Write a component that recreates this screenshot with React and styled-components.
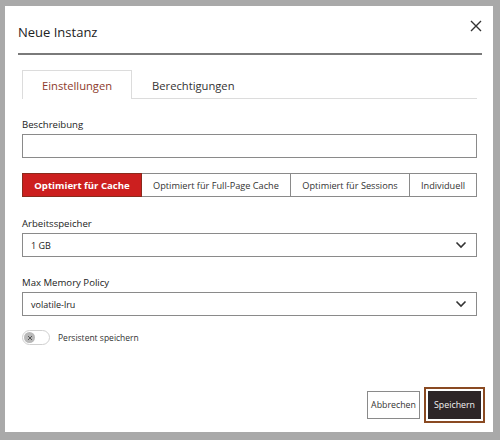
import React, { useState } from 'react';
import styled, { createGlobalStyle } from 'styled-components';

const GlobalStyle = createGlobalStyle`
  html, body {
    margin: 0;
    padding: 0;
    background: #a9a9a9;
    font-family: "Open Sans", "Liberation Sans", sans-serif;
    color: #222;
  }
`;

const Backdrop = styled.div`
  width: 500px;
  height: 440px;
  padding: 6px 0 0 5px;
  box-sizing: border-box;
  overflow: hidden;
`;

const Modal = styled.div`
  width: 488px;
  height: 426px;
  background: #fff;
  display: flex;
  flex-direction: column;
  box-sizing: border-box;
`;

const Header = styled.div`
  margin: 0 11px 0 13px;
  height: 49px;
  border-bottom: 2px solid #7a7a7a;
  display: flex;
  align-items: center;
  justify-content: space-between;
  box-sizing: border-box;
`;

const Title = styled.h2`
  margin: 0;
  font-size: 13px;
  font-weight: 400;
  color: #222;
  padding-top: 4px;
`;

const CloseButton = styled.button`
  border: 0;
  background: none;
  padding: 0;
  margin: -8px -4px 0 0;
  width: 20px;
  height: 20px;
  display: flex;
  align-items: center;
  justify-content: center;
  cursor: pointer;
`;

const Body = styled.div`
  flex: 1;
  padding: 15px 16px 0 17px;
  display: flex;
  flex-direction: column;
`;

const TabBar = styled.div`
  display: flex;
  height: 29px;
  box-shadow: inset 0 -1px 0 #dcdcdc;
`;

const Tab = styled.button`
  font-family: inherit;
  font-size: 11.2px;
  height: 29px;
  padding: 0 19px;
  background: ${({ active }) => (active ? '#fff' : 'transparent')};
  border: 1px solid ${({ active }) => (active ? '#dcdcdc' : 'transparent')};
  border-bottom: 0;
  color: ${({ active }) => (active ? '#8e3b2c' : '#333')};
  cursor: pointer;
`;

const Field = styled.div`
  display: flex;
  flex-direction: column;
  margin-top: ${({ top }) => top}px;
`;

const Label = styled.label`
  font-size: 9.6px;
  line-height: 12px;
  color: #222;
  margin-bottom: 3px;
`;

const TextInput = styled.input`
  height: 24px;
  box-sizing: border-box;
  border: 1px solid #8a8a8a;
  font-family: inherit;
  font-size: 9px;
  padding: 0 8px;
  outline: none;
`;

const Presets = styled.div`
  display: flex;
  margin-top: 15px;
  height: 24px;
`;

const Preset = styled.button`
  font-family: inherit;
  font-size: ${({ active }) => (active ? 9.6 : 9.2)}px;
  font-weight: ${({ active }) => (active ? 700 : 400)};
  width: ${({ w }) => w}px;
  height: 24px;
  padding: 0;
  border: 1px solid ${({ active }) => (active ? '#8a2a1c' : '#8a8a8a')};
  margin-left: -1px;
  background: ${({ active }) => (active ? '#cc1f1f' : '#fff')};
  color: ${({ active }) => (active ? '#fff' : '#333')};
  position: relative;
  z-index: ${({ active }) => (active ? 1 : 0)};
  cursor: pointer;
  &:first-child {
    margin-left: 0;
  }
`;

const SelectBox = styled.div`
  height: 24px;
  box-sizing: border-box;
  border: 1px solid #8a8a8a;
  display: flex;
  align-items: center;
  justify-content: space-between;
  padding: 0 9px 0 8px;
  font-size: 9px;
  color: #222;
`;

const ToggleRow = styled.div`
  display: flex;
  align-items: center;
  gap: 8px;
  margin-top: 14px;
`;

const Switch = styled.button`
  width: 28px;
  height: 15px;
  border-radius: 8px;
  border: 1px solid #d0d0d0;
  background: #fff;
  padding: 1px;
  display: flex;
  align-items: center;
  box-sizing: border-box;
  cursor: pointer;
`;

const Knob = styled.span`
  width: 11px;
  height: 11px;
  border-radius: 50%;
  background: #b8b8b8;
  display: flex;
  align-items: center;
  justify-content: center;
`;

const ToggleText = styled.span`
  font-size: 8.5px;
  color: #333;
`;

const Footer = styled.div`
  display: flex;
  justify-content: flex-end;
  align-items: center;
  gap: 8px;
  padding: 0 12px 13px 0;
`;

const Button = styled.button`
  font-family: inherit;
  font-size: 8.8px;
  height: 28px;
  width: 53px;
  padding: 0;
  border: 1px solid ${({ primary }) => (primary ? '#2d2527' : '#8a8a8a')};
  background: ${({ primary }) => (primary ? '#2d2527' : '#fff')};
  color: ${({ primary }) => (primary ? '#f2f2f2' : '#333')};
  outline: ${({ primary }) => (primary ? '2px solid #8a4a22' : 'none')};
  outline-offset: 2px;
  cursor: pointer;
`;

const Chevron = () => (
  <svg width="12" height="8" viewBox="0 0 12 8">
    <path d="M1.5 1.5 L6 6 L10.5 1.5" fill="none" stroke="#333" strokeWidth="1.6" />
  </svg>
);

const presets = [
  { label: 'Optimiert für Cache', w: 120 },
  { label: 'Optimiert für Full-Page Cache', w: 150 },
  { label: 'Optimiert für Sessions', w: 120 },
  { label: 'Individuell', w: 68 },
];

export default function App() {
  const [tab, setTab] = useState(0);
  const [preset, setPreset] = useState(0);

  return (
    <>
      <GlobalStyle />
      <Backdrop>
        <Modal>
          <Header>
            <Title>Neue Instanz</Title>
            <CloseButton aria-label="Schließen">
              <svg width="12" height="12" viewBox="0 0 12 12">
                <path d="M1 1 L11 11 M11 1 L1 11" stroke="#333" strokeWidth="1.4" />
              </svg>
            </CloseButton>
          </Header>
          <Body>
            <TabBar>
              <Tab active={tab === 0} onClick={() => setTab(0)}>Einstellungen</Tab>
              <Tab active={tab === 1} onClick={() => setTab(1)}>Berechtigungen</Tab>
            </TabBar>

            <Field top={20}>
              <Label>Beschreibung</Label>
              <TextInput />
            </Field>

            <Presets>
              {presets.map((p, i) => (
                <Preset key={p.label} w={p.w} active={preset === i} onClick={() => setPreset(i)}>
                  {p.label}
                </Preset>
              ))}
            </Presets>

            <Field top={21}>
              <Label>Arbeitsspeicher</Label>
              <SelectBox>
                <span>1 GB</span>
                <Chevron />
              </SelectBox>
            </Field>

            <Field top={20}>
              <Label>Max Memory Policy</Label>
              <SelectBox>
                <span>volatile-lru</span>
                <Chevron />
              </SelectBox>
            </Field>

            <ToggleRow>
              <Switch aria-label="Persistent speichern">
                <Knob>
                  <svg width="6" height="6" viewBox="0 0 6 6">
                    <path d="M1 1 L5 5 M5 1 L1 5" stroke="#555" strokeWidth="1" />
                  </svg>
                </Knob>
              </Switch>
              <ToggleText>Persistent speichern</ToggleText>
            </ToggleRow>
          </Body>
          <Footer>
            <Button>Abbrechen</Button>
            <Button primary>Speichern</Button>
          </Footer>
        </Modal>
      </Backdrop>
    </>
  );
}
